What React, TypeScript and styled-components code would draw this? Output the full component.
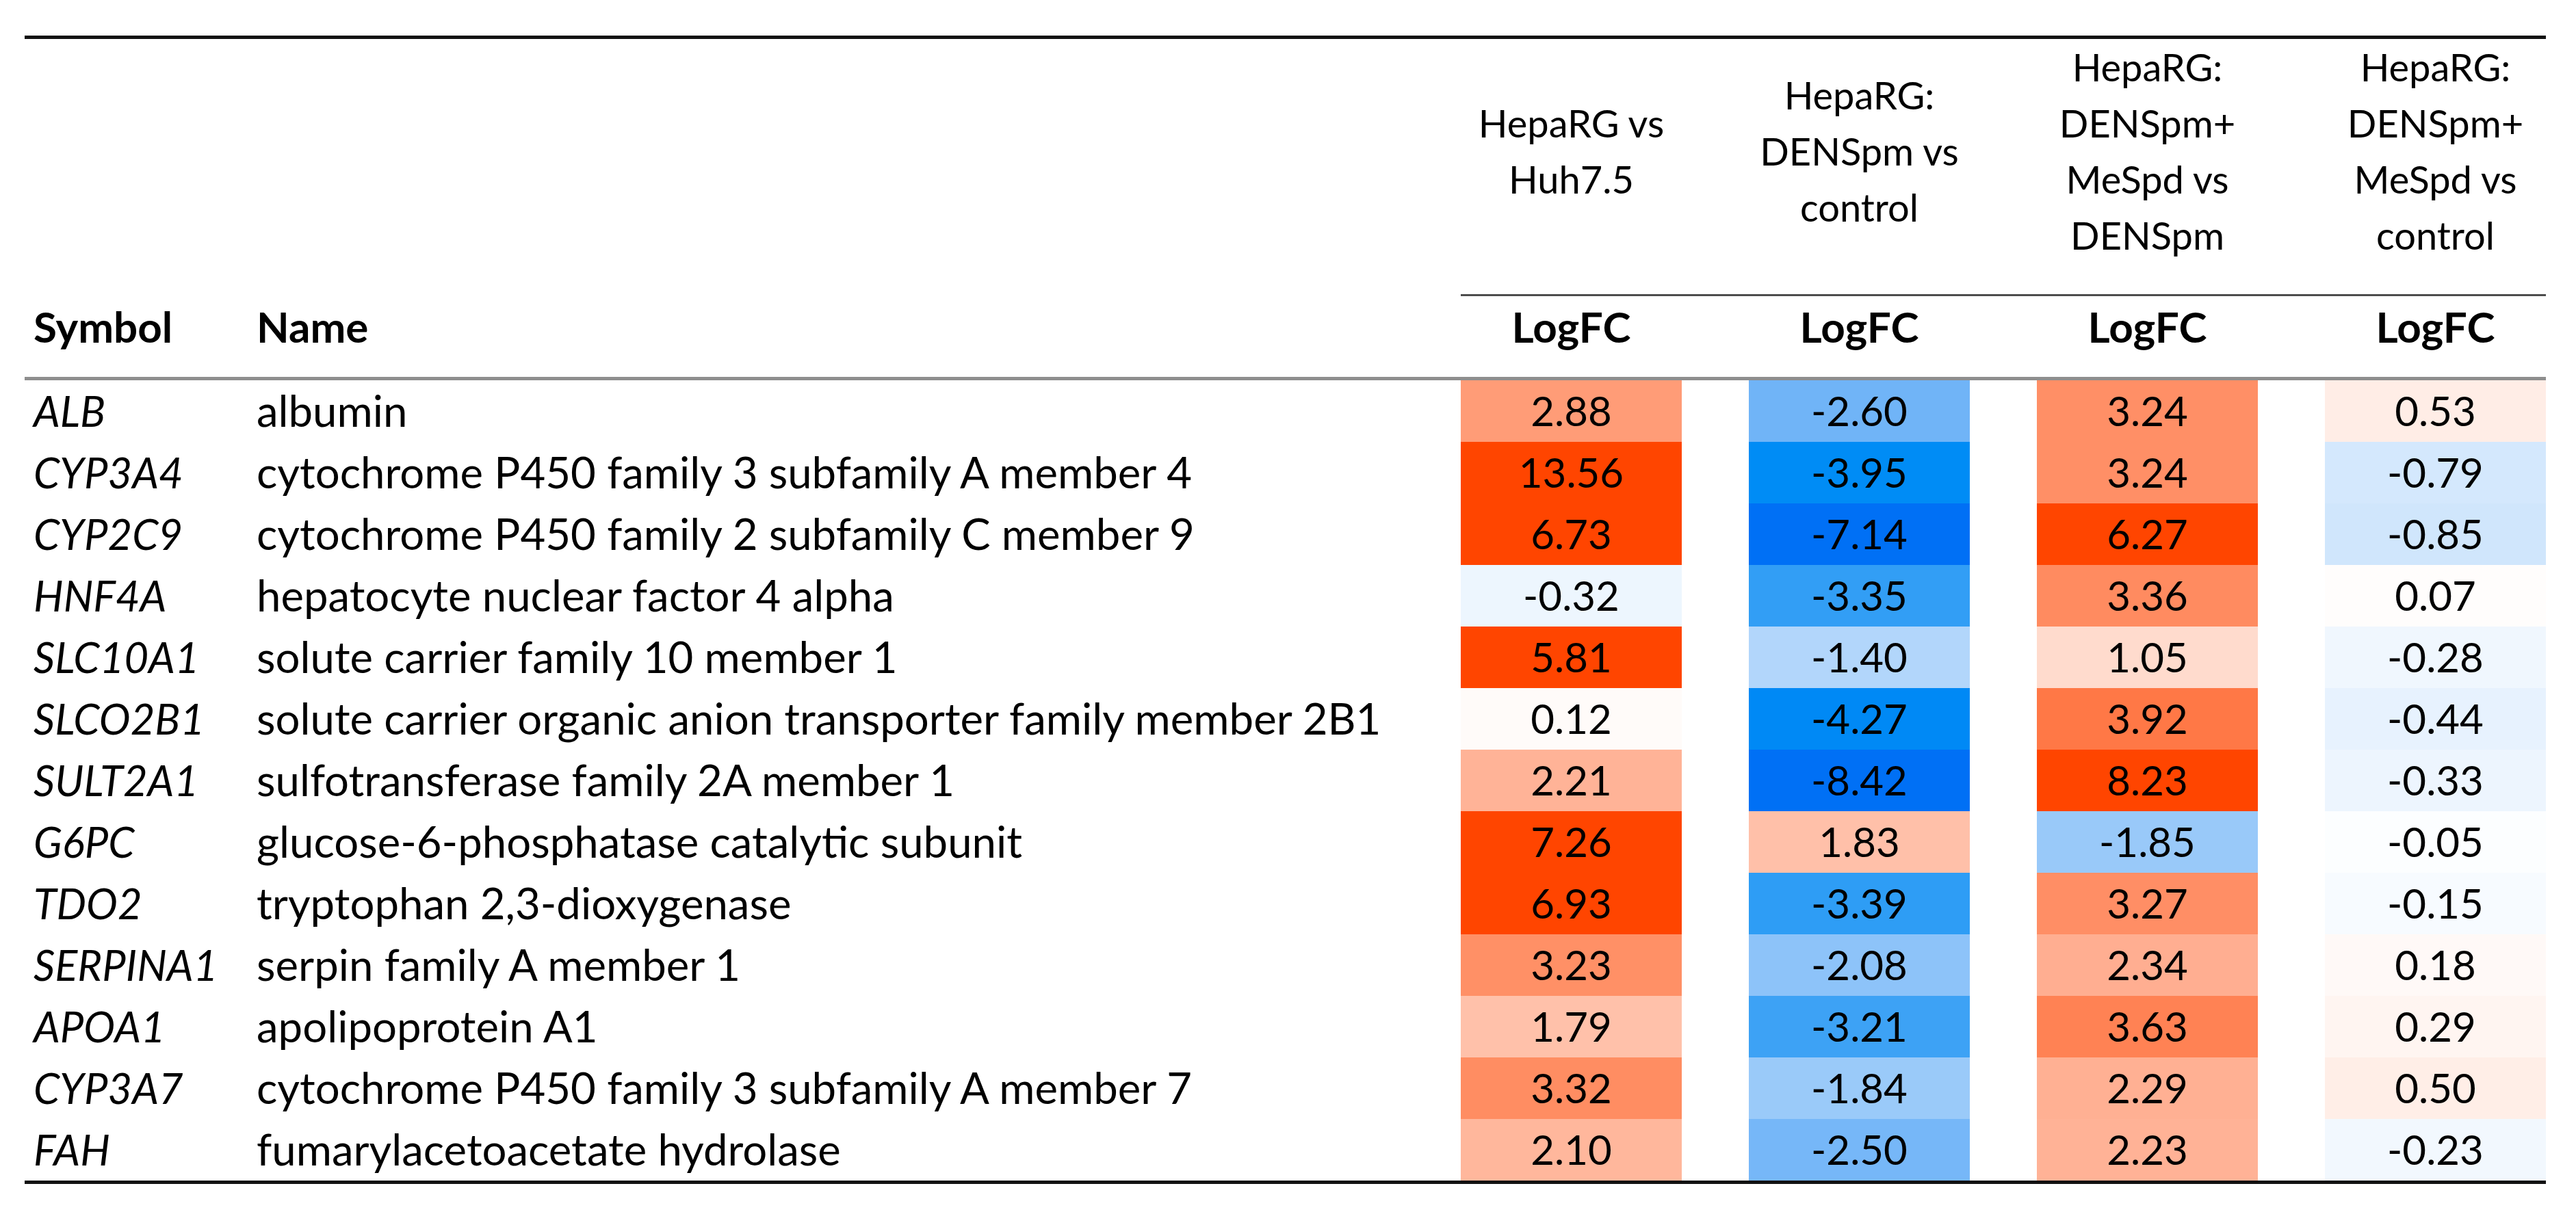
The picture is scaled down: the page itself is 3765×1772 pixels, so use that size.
import React from "react";
import styled, { createGlobalStyle } from "styled-components";

const GlobalStyle = createGlobalStyle`
  html, body {
    margin: 0;
    padding: 0;
    background: #fff;
  }
  body {
    font-family: Lato, "Liberation Sans", sans-serif;
    color: #000;
  }
`;

const COLS = "326px 1675px repeat(4, 421px)";

const Page = styled.div`
  width: 3765px;
  height: 1772px;
  padding: 52px 0 0 36px;
  box-sizing: border-box;
`;

const Table = styled.div`
  width: 3685px;
  border-top: 5px solid #111;
  border-bottom: 5px solid #111;
  font-size: 63.5px;
`;

const Head = styled.div`
  display: grid;
  grid-template-columns: ${COLS};
  grid-template-rows: 376px 118px;
  border-bottom: 5px solid #8e8e8e;
`;

const Groups = styled.div`
  grid-column: 3 / -1;
  grid-row: 1;
  margin-left: 98px;
  display: grid;
  grid-template-columns: 323px repeat(3, 421px);
  border-bottom: 3px solid #4d4d4d;
`;

const GroupLabel = styled.div`
  display: flex;
  flex-direction: column;
  justify-content: center;
  align-items: center;
  padding-bottom: 45px;
  font-size: 56px;
  line-height: 82px;
  text-align: center;

  & + & {
    padding-left: 98px;
  }
`;

const HeadCell = styled.div<{ $col: number; $center?: boolean }>`
  grid-row: 2;
  grid-column: ${(p) => p.$col};
  display: flex;
  align-items: flex-end;
  justify-content: ${(p) => (p.$center ? "center" : "flex-start")};
  padding: 0 0 37px ${(p) => (p.$center ? "98px" : "13px")};
  font-size: 62px;
  font-weight: 700;
  white-space: nowrap;
`;

const Row = styled.div`
  display: grid;
  grid-template-columns: ${COLS};
  height: 90px;
  line-height: 88px;
  white-space: nowrap;
`;

const Symbol = styled.div`
  padding-left: 13px;
  font-size: 61.5px;
  font-style: italic;
`;

const Name = styled.div`
  padding-left: 13px;
`;

const Value = styled.div<{ $bg: string }>`
  margin-left: 98px;
  background: ${(p) => p.$bg};
  font-size: 60px;
  text-align: center;
`;

const groups = [
  ["HepaRG vs", "Huh7.5"],
  ["HepaRG:", "DENSpm vs", "control"],
  ["HepaRG:", "DENSpm+", "MeSpd vs", "DENSpm"],
  ["HepaRG:", "DENSpm+", "MeSpd vs", "control"],
];

const rows: [string, string, number[]][] = [
  ["ALB", "albumin", [2.88, -2.6, 3.24, 0.53]],
  ["CYP3A4", "cytochrome P450 family 3 subfamily A member 4", [13.56, -3.95, 3.24, -0.79]],
  ["CYP2C9", "cytochrome P450 family 2 subfamily C member 9", [6.73, -7.14, 6.27, -0.85]],
  ["HNF4A", "hepatocyte nuclear factor 4 alpha", [-0.32, -3.35, 3.36, 0.07]],
  ["SLC10A1", "solute carrier family 10 member 1", [5.81, -1.4, 1.05, -0.28]],
  ["SLCO2B1", "solute carrier organic anion transporter family member 2B1", [0.12, -4.27, 3.92, -0.44]],
  ["SULT2A1", "sulfotransferase family 2A member 1", [2.21, -8.42, 8.23, -0.33]],
  ["G6PC", "glucose-6-phosphatase catalytic subunit", [7.26, 1.83, -1.85, -0.05]],
  ["TDO2", "tryptophan 2,3-dioxygenase", [6.93, -3.39, 3.27, -0.15]],
  ["SERPINA1", "serpin family A member 1", [3.23, -2.08, 2.34, 0.18]],
  ["APOA1", "apolipoprotein A1", [1.79, -3.21, 3.63, 0.29]],
  ["CYP3A7", "cytochrome P450 family 3 subfamily A member 7", [3.32, -1.84, 2.29, 0.5]],
  ["FAH", "fumarylacetoacetate hydrolase", [2.1, -2.5, 2.23, -0.23]],
];

// red for up, blue for down, white around zero
const heat = (v: number) => {
  if (v >= 0) {
    const t = Math.min(v / 5.4, 1);
    return `rgb(255, ${Math.round(255 - 186 * t)}, ${Math.round(255 - 255 * t)})`;
  }
  const a = -v;
  const r = a <= 2.6 ? 255 - 55 * a : Math.max(0, 112 - 83 * (a - 2.6));
  const g = a <= 3.95 ? 255 - 29 * a : Math.max(112, 140 - 10 * (a - 3.95));
  const b = Math.max(245, 255 - 3 * a);
  return `rgb(${Math.round(r)}, ${Math.round(g)}, ${Math.round(b)})`;
};

const App = () => {
  return (
    <Page>
      <GlobalStyle />
      <Table>
        <Head>
          <Groups>
            {groups.map((lines, i) => (
              <GroupLabel key={i}>
                {lines.map((l) => (
                  <span key={l}>{l}</span>
                ))}
              </GroupLabel>
            ))}
          </Groups>
          <HeadCell $col={1}>Symbol</HeadCell>
          <HeadCell $col={2}>Name</HeadCell>
          {[3, 4, 5, 6].map((c) => (
            <HeadCell key={c} $col={c} $center>
              LogFC
            </HeadCell>
          ))}
        </Head>
        {rows.map(([sym, name, vals]) => (
          <Row key={sym}>
            <Symbol>{sym}</Symbol>
            <Name>{name}</Name>
            {vals.map((v, i) => (
              <Value key={i} $bg={heat(v)}>
                {v.toFixed(2)}
              </Value>
            ))}
          </Row>
        ))}
      </Table>
    </Page>
  );
};

export default App;
